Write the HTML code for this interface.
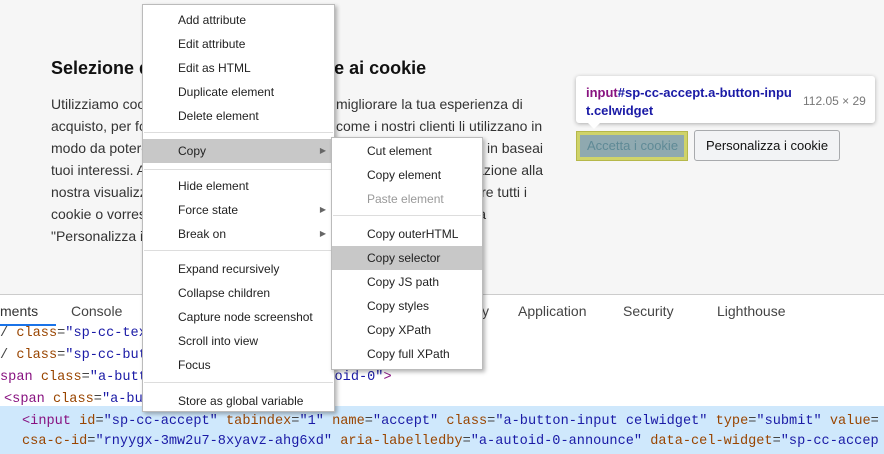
<!DOCTYPE html>
<html><head><meta charset="utf-8"><style>
body{margin:0;width:884px;height:454px;overflow:hidden;background:#f6f6f6;position:relative;font-family:"Liberation Sans",sans-serif}
.a{position:absolute;white-space:nowrap}
h1{position:absolute;left:51px;top:58px;margin:0;font-size:18px;font-weight:bold;color:#111}
.p{position:absolute;font-size:14px;line-height:22px;color:#333;white-space:nowrap}
.menu{position:absolute;background:#fff;border:1px solid #bbb;box-shadow:2px 2px 4px rgba(0,0,0,.3);font-size:12px;color:#222}
.it{position:absolute;left:0;right:0;height:24px;line-height:24px}
.hl{background:#c8c8c8}
.sep{position:absolute;left:1px;right:1px;height:1px;background:#ddd}
.ar{position:absolute;right:8px;font-size:8px;color:#666}
.tabs{position:absolute;left:0;top:294px;width:884px;height:32px;background:#fff;border-top:1px solid #ccc;border-bottom:1px solid #ddd;font-size:14px;color:#444}
.code{position:absolute;left:0;top:327px;width:884px;height:127px;background:#fff;font-family:"Liberation Mono",monospace;font-size:13.6px}
.ln{position:absolute;height:22px;line-height:22px;white-space:pre;color:#444}
.t{color:#881280}.n{color:#994500}.v{color:#1a1aa6}
</style></head><body>
<h1>Selezione delle preferenze relative ai cookie</h1>
<div class="p" style="left:51px;top:93px">Utilizziamo cookie<br>acquisto, per fornire<br>modo da potere<br>tuoi interessi. Accetti<br>nostra visualizzazione<br>cookie o vorresti<br>"Personalizza i cookie".</div>
<div class="p" style="left:336px;top:93px">migliorare la tua esperienza di<br>come i nostri clienti li utilizzano in</div>
<div class="p" style="left:343px;top:137px;width:200px;text-align:right">anche in baseai<br>in relazione alla<br><span style="margin-right:16px">accettare tutti i</span><br><span style="margin-right:57px">su la</span></div>

<div class="a" style="left:576px;top:76px;width:299px;height:47px;background:#fff;border-radius:3px;box-shadow:0 1px 4px rgba(0,0,0,.3)"></div>
<div class="a" style="left:587px;top:122px;width:0;height:0;border-left:7px solid transparent;border-right:7px solid transparent;border-top:7px solid #fff"></div>
<div class="a" style="left:586px;top:84px;font-size:13px;font-weight:bold;line-height:18px;color:#1a1aa6"><span style="color:#881280">input</span>#sp-cc-accept.a-button-inpu<br>t.celwidget</div>
<div class="a" style="left:803px;top:94px;font-size:12px;color:#777">112.05 × 29</div>
<div class="a" style="left:576px;top:131px;width:110px;height:28px;background:#8fa9b0;border:1px solid #b6b84a;box-shadow:inset 0 0 0 3px #cfd36a"></div>
<div class="a" style="left:587px;top:138px;font-size:13px;color:#5f8a96">Accetta i cookie</div>
<div class="a" style="left:694px;top:130px;width:144px;height:29px;background:#f2f3f5;border:1px solid #a8aaad;border-radius:3px;font-size:13px;line-height:29px;text-align:center;color:#111">Personalizza i cookie</div>

<div class="tabs">
<span class="a" style="left:0;top:8px;color:#333">ments</span>
<div class="a" style="left:0;top:29px;width:56px;height:2px;background:#1a73e8"></div>
<span class="a" style="left:71px;top:8px">Console</span>
<span class="a" style="left:482px;top:8px">y</span>
<span class="a" style="left:518px;top:8px">Application</span>
<span class="a" style="left:623px;top:8px">Security</span>
<span class="a" style="left:717px;top:8px">Lighthouse</span>
</div>
<div class="code">
<div class="ln" style="left:0;top:-4px">/ <span class="n">class</span>=<span class="v">"sp-cc-tex</span></div>
<div class="ln" style="left:0;top:18px">/ <span class="n">class</span>=<span class="v">"sp-cc-but</span></div>
<div class="ln" style="left:0;top:40px"><span class="t">span</span> <span class="n">class</span>=<span class="v">"a-butt                </span>=<span class="v">"a-autoid-0"</span><span class="t">&gt;</span></div>
<div class="ln" style="left:4px;top:62px"><span class="t">&lt;span</span> <span class="n">class</span>=<span class="v">"a-bu</span></div>
<div style="position:absolute;left:0;top:79px;width:884px;height:48px;background:#cfe8fc"></div>
<div class="ln" style="left:22px;top:84px"><span class="t">&lt;input</span> <span class="n">id</span>=<span class="v">"sp-cc-accept"</span> <span class="n">tabindex</span>=<span class="v">"1"</span> <span class="n">name</span>=<span class="v">"accept"</span> <span class="n">class</span>=<span class="v">"a-button-input celwidget"</span> <span class="n">type</span>=<span class="v">"submit"</span> <span class="n">value</span>=</div>
<div class="ln" style="left:22px;top:104px"><span class="n">csa-c-id</span>=<span class="v">"rnyygx-3mw2u7-8xyavz-ahg6xd"</span> <span class="n">aria-labelledby</span>=<span class="v">"a-autoid-0-announce"</span> <span class="n">data-cel-widget</span>=<span class="v">"sp-cc-accep</span></div>
</div>

<div class="menu" style="left:142px;top:4px;width:191px;height:406px">
<div class="it" style="top:3px"><span class="a" style="left:35px">Add attribute</span></div>
<div class="it" style="top:27px"><span class="a" style="left:35px">Edit attribute</span></div>
<div class="it" style="top:51px"><span class="a" style="left:35px">Edit as HTML</span></div>
<div class="it" style="top:75px"><span class="a" style="left:35px">Duplicate element</span></div>
<div class="it" style="top:99px"><span class="a" style="left:35px">Delete element</span></div>
<div class="sep" style="top:127px"></div>
<div class="it hl" style="top:134px"><span class="a" style="left:35px">Copy</span><span class="ar">▶</span></div>
<div class="sep" style="top:164px"></div>
<div class="it" style="top:169px"><span class="a" style="left:35px">Hide element</span></div>
<div class="it" style="top:193px"><span class="a" style="left:35px">Force state</span><span class="ar">▶</span></div>
<div class="it" style="top:217px"><span class="a" style="left:35px">Break on</span><span class="ar">▶</span></div>
<div class="sep" style="top:245px"></div>
<div class="it" style="top:252px"><span class="a" style="left:35px">Expand recursively</span></div>
<div class="it" style="top:276px"><span class="a" style="left:35px">Collapse children</span></div>
<div class="it" style="top:300px"><span class="a" style="left:35px">Capture node screenshot</span></div>
<div class="it" style="top:324px"><span class="a" style="left:35px">Scroll into view</span></div>
<div class="it" style="top:348px"><span class="a" style="left:35px">Focus</span></div>
<div class="sep" style="top:377px"></div>
<div class="it" style="top:384px"><span class="a" style="left:35px">Store as global variable</span></div>
</div>

<div class="menu" style="left:331px;top:137px;width:150px;height:231px">
<div class="it" style="top:1px"><span class="a" style="left:35px">Cut element</span></div>
<div class="it" style="top:25px"><span class="a" style="left:35px">Copy element</span></div>
<div class="it" style="top:49px"><span class="a" style="left:35px;color:#999">Paste element</span></div>
<div class="sep" style="top:77px"></div>
<div class="it" style="top:84px"><span class="a" style="left:35px">Copy outerHTML</span></div>
<div class="it hl" style="top:108px"><span class="a" style="left:35px">Copy selector</span></div>
<div class="it" style="top:132px"><span class="a" style="left:35px">Copy JS path</span></div>
<div class="it" style="top:156px"><span class="a" style="left:35px">Copy styles</span></div>
<div class="it" style="top:180px"><span class="a" style="left:35px">Copy XPath</span></div>
<div class="it" style="top:204px"><span class="a" style="left:35px">Copy full XPath</span></div>
</div>
</body></html>
